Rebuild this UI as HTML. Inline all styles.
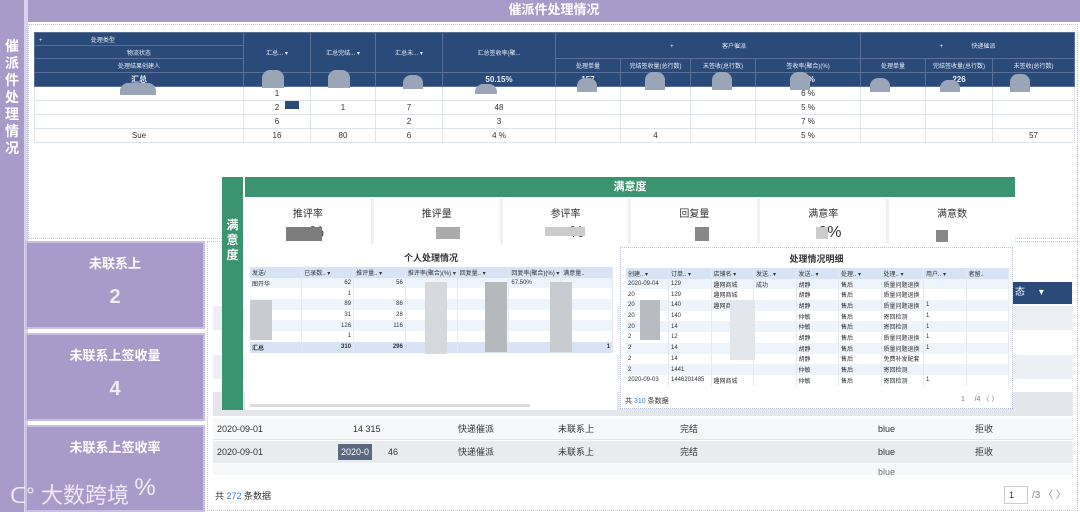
<!DOCTYPE html><html><head><meta charset="utf-8"><style>
*{box-sizing:border-box;margin:0;padding:0}
body{width:1080px;height:512px;overflow:hidden;background:#fff;font-family:"Liberation Sans","Noto Sans CJK SC",sans-serif;position:relative;font-size:8px;color:#333}
.a{position:absolute}
.pur{background:#a89ac9}
.vt{color:#fff;font-weight:bold;font-size:14px;line-height:17px;text-align:center}
table{border-collapse:collapse;table-layout:fixed}
.t1 td{border:1px solid #dfe3ea;height:14px;text-align:center;font-size:8px;overflow:hidden;white-space:nowrap}
.t1 .h td{background:#2a4a7a;color:#e8ecf4;border-color:#5a7099;font-size:6px}
.card{background:#a89ac9;border:2px solid #c9bfe0;color:#fff;text-align:center;font-weight:bold}
.kp{background:#fff;border-right:3px solid #eef0f3;text-align:center;font-size:10px;color:#333}
.st td{font-size:6px;height:10.7px;border-right:1px solid #e4e9f2;white-space:nowrap;overflow:hidden;padding:0 2px}
.blob{position:absolute;background:#9aa6b8;border-radius:8px 8px 0 0}
.gr{position:absolute;background:#eceff3}
</style></head><body>
<div class="a pur" style="left:0;top:0;width:24px;height:512px"></div>
<div class="a vt" style="left:2px;top:38px;width:20px">催<br>派<br>件<br>处<br>理<br>情<br>况</div>
<div class="a" style="left:24px;top:0;width:4px;height:512px;background:#d9d4ea"></div>
<div class="a pur" style="left:28px;top:0;width:1052px;height:22px;color:#fff;font-weight:bold;font-size:13px;text-align:center;line-height:20px">催派件处理情况</div>
<div class="a" style="left:28px;top:24px;width:1050px;height:215px;border:1px dotted #b8c4dd"></div>
<table class="a t1" style="left:34px;top:32px;width:1040px">
<colgroup><col style="width:209px"><col style="width:67px"><col style="width:65px"><col style="width:67px"><col style="width:113px"><col style="width:65px"><col style="width:70px"><col style="width:65px"><col style="width:105px"><col style="width:65px"><col style="width:67px"><col style="width:82px"></colgroup>
<tr class="h"><td style="height:13px;text-align:left;padding-left:4px">+ &nbsp; &nbsp; &nbsp; &nbsp; &nbsp; &nbsp; &nbsp; &nbsp; &nbsp; &nbsp; &nbsp; &nbsp; &nbsp; &nbsp; 处理类型</td><td rowspan="3">汇总... ▾</td><td rowspan="3">汇总完结... ▾</td><td rowspan="3">汇总未... ▾</td><td rowspan="3">汇总签收率(聚...</td><td colspan="4" style="height:26px" rowspan="2">+ &nbsp; &nbsp; &nbsp; &nbsp; &nbsp; &nbsp; &nbsp; &nbsp; &nbsp; &nbsp; &nbsp; &nbsp; &nbsp; &nbsp; 客户催派</td><td colspan="3" rowspan="2">+ &nbsp; &nbsp; &nbsp; &nbsp; &nbsp; &nbsp; &nbsp; &nbsp; 快递催派</td></tr>
<tr class="h"><td style="height:13px">物流状态</td></tr>
<tr class="h"><td style="height:14px">处理结果创建人</td><td>处理单量</td><td>完结签收量(总行数)</td><td>未签收(总行数)</td><td>签收率(聚合)(%)</td><td>处理单量</td><td>完结签收量(总行数)</td><td>未签收(总行数)</td></tr>
<tr class="h"><td style="font-size:8px;font-weight:bold">汇总</td><td></td><td></td><td></td><td style="font-size:8px;font-weight:bold">50.15%</td><td style="font-size:8px;font-weight:bold">157</td><td></td><td></td><td style="font-size:8px;font-weight:bold">5 %</td><td></td><td style="font-size:8px;font-weight:bold">226</td><td></td></tr>
<tr><td></td><td>1</td><td></td><td></td><td></td><td></td><td></td><td></td><td>6 %</td><td></td><td></td><td></td></tr>
<tr><td></td><td>2</td><td>1</td><td>7</td><td>48</td><td></td><td></td><td></td><td>5 %</td><td></td><td></td><td></td></tr>
<tr><td></td><td>6</td><td></td><td>2</td><td>3</td><td></td><td></td><td></td><td>7 %</td><td></td><td></td><td></td></tr>
<tr><td>Sue</td><td>16</td><td>80</td><td>6</td><td>4 %</td><td></td><td>4</td><td></td><td>5 %</td><td></td><td></td><td>57</td></tr>
</table>
<div class="blob" style="left:120px;top:83px;width:36px;height:12px"></div>
<div class="blob" style="left:262px;top:70px;width:22px;height:18px"></div>
<div class="blob" style="left:328px;top:70px;width:22px;height:18px"></div>
<div class="blob" style="left:403px;top:75px;width:20px;height:14px"></div>
<div class="blob" style="left:475px;top:84px;width:22px;height:10px"></div>
<div class="blob" style="left:577px;top:78px;width:20px;height:14px"></div>
<div class="blob" style="left:645px;top:72px;width:20px;height:18px"></div>
<div class="blob" style="left:712px;top:72px;width:20px;height:18px"></div>
<div class="blob" style="left:790px;top:72px;width:20px;height:18px"></div>
<div class="blob" style="left:870px;top:78px;width:20px;height:14px"></div>
<div class="blob" style="left:940px;top:80px;width:20px;height:12px"></div>
<div class="blob" style="left:1010px;top:74px;width:20px;height:18px"></div>
<div class="a" style="left:285px;top:101px;width:14px;height:8px;background:#2a4a7a"></div>

<div class="a card" style="left:25px;top:241px;width:180px;height:88px;font-size:13px;padding-top:10px">未联系上<div style="font-size:20px;margin-top:14px;color:#eee">2</div></div>
<div class="a card" style="left:25px;top:333px;width:180px;height:88px;font-size:13px;padding-top:10px">未联系上签收量<div style="font-size:20px;margin-top:14px;color:#eee">4</div></div>
<div class="a card" style="left:25px;top:425px;width:180px;height:87px;font-size:13px;padding-top:10px">未联系上签收率<div style="font-size:24px;margin-top:18px;color:#eee;font-weight:normal;padding-left:60px">%</div></div>
<div class="a" style="left:10px;top:478px;color:#f4f2f9;font-size:22px;opacity:.9">ᑕ° 大数跨境</div>

<div class="a" style="left:207px;top:241px;width:871px;height:270px;border:1px dotted #b8c4dd;background:#fff"></div>
<div class="a" style="left:1012px;top:282px;width:60px;height:22px;background:#2a4a7a;color:#fff;font-size:10px;line-height:22px;padding-left:3px">态 &nbsp; &nbsp; ▾</div>
<div class="gr" style="left:213px;top:306px;width:860px;height:24px"></div>
<div class="gr" style="left:213px;top:355px;width:860px;height:24px"></div>
<div class="gr" style="left:213px;top:392px;width:860px;height:24px;background:#e3e6ea"></div>
<div class="a" style="left:213px;top:418px;width:860px;height:22px;background:#f7f8fa;border-bottom:1px solid #e1e4e8;font-size:9px;line-height:22px">
<span class="a" style="left:4px">2020-09-01</span><span class="a" style="left:140px">14 315</span><span class="a" style="left:245px">快递催派</span><span class="a" style="left:345px">未联系上</span><span class="a" style="left:467px">完结</span><span class="a" style="left:665px">blue</span><span class="a" style="left:762px">拒收</span></div>
<div class="a" style="left:213px;top:441px;width:860px;height:22px;background:#e9ecef;font-size:9px;line-height:22px">
<span class="a" style="left:4px">2020-09-01</span><span class="a" style="left:125px;background:#5a6880;color:#fff;padding:0 3px;line-height:16px;top:3px">2020-0</span><span class="a" style="left:175px">46</span><span class="a" style="left:245px">快递催派</span><span class="a" style="left:345px">未联系上</span><span class="a" style="left:467px">完结</span><span class="a" style="left:665px">blue</span><span class="a" style="left:762px">拒收</span></div>
<div class="a" style="left:213px;top:463px;width:860px;height:12px;background:#f7f8fa;overflow:hidden;font-size:9px;color:#777"><span class="a" style="left:665px;top:4px">blue</span></div>
<div class="a" style="left:215px;top:489px;font-size:9px">共 <span style="color:#3a7bd5">272</span> 条数据</div>
<div class="a" style="left:1004px;top:486px;width:24px;height:18px;border:1px solid #ccc;font-size:9px;line-height:16px;padding-left:4px">1</div>
<div class="a" style="left:1032px;top:486px;font-size:10px;color:#888">/3 〈 〉</div>

<div class="a" style="left:222px;top:177px;width:21px;height:233px;background:#3a9470"></div>
<div class="a vt" style="left:222px;top:218px;width:21px;font-size:12px;line-height:15px">满<br>意<br>度</div>
<div class="a" style="left:245px;top:177px;width:770px;height:20px;background:#3a9470;color:#fff;font-weight:bold;font-size:11px;text-align:center;line-height:20px">满意度</div>
<div class="a" style="left:245px;top:198px;width:770px;height:46px;display:flex;background:#eef0f3">
<div class="kp" style="flex:1;padding-top:7px">推评率<div style="font-size:16px;margin-top:4px">&nbsp;&nbsp;&nbsp;&nbsp;%</div></div>
<div class="kp" style="flex:1;padding-top:7px">推评量</div>
<div class="kp" style="flex:1;padding-top:7px">参评率<div style="font-size:16px;margin-top:4px">&nbsp;&nbsp;&nbsp;&nbsp;&nbsp;%</div></div>
<div class="kp" style="flex:1;padding-top:7px">回复量</div>
<div class="kp" style="flex:1;padding-top:7px">满意率<div style="font-size:16px;margin-top:4px">&nbsp;&nbsp;&nbsp;0%</div></div>
<div class="kp" style="flex:1;padding-top:7px;border:0">满意数</div></div>
<div class="a" style="left:286px;top:227px;width:36px;height:14px;background:#7d7d7d"></div>
<div class="a" style="left:436px;top:227px;width:24px;height:12px;background:#aaa"></div>
<div class="a" style="left:545px;top:227px;width:40px;height:9px;background:#ccc"></div>
<div class="a" style="left:695px;top:227px;width:14px;height:14px;background:#888"></div>
<div class="a" style="left:816px;top:227px;width:12px;height:12px;background:#ccc"></div>
<div class="a" style="left:936px;top:230px;width:12px;height:12px;background:#888"></div>

<div class="a" style="left:245px;top:246px;width:372px;height:164px;background:#fff">
<div style="text-align:center;font-size:9px;font-weight:bold;margin-top:5px">个人处理情况</div>
<table class="st a" style="left:5px;top:21px;width:363px">
<tr style="background:#d6e4f5"><td>发送/</td><td>已录数.. ▾</td><td>推评量.. ▾</td><td>推评率(聚合)(%) ▾</td><td>回复量.. ▾</td><td>回复率(聚合)(%) ▾</td><td>满意量..</td></tr>
<tr style="background:#eef4fb"><td>图开华</td><td style="text-align:right">62</td><td style="text-align:right">56</td><td></td><td></td><td>67.50%</td><td></td></tr>
<tr><td></td><td style="text-align:right">1</td><td></td><td></td><td></td><td></td><td></td></tr>
<tr style="background:#eef4fb"><td></td><td style="text-align:right">89</td><td style="text-align:right">86</td><td></td><td></td><td></td><td></td></tr>
<tr><td></td><td style="text-align:right">31</td><td style="text-align:right">28</td><td></td><td></td><td></td><td></td></tr>
<tr style="background:#eef4fb"><td></td><td style="text-align:right">126</td><td style="text-align:right">116</td><td></td><td></td><td></td><td></td></tr>
<tr><td></td><td style="text-align:right">1</td><td></td><td></td><td></td><td></td><td></td></tr>
<tr style="background:#d6e4f5;font-weight:bold"><td>汇总</td><td style="text-align:right">310</td><td style="text-align:right">296</td><td></td><td></td><td></td><td style="text-align:right">1</td></tr>
</table>
<div class="a" style="left:5px;top:158px;width:280px;height:3px;background:#ddd"></div></div>
<div class="a" style="left:425px;top:282px;width:22px;height:72px;background:#d5d8dd"></div>
<div class="a" style="left:485px;top:282px;width:22px;height:70px;background:#b5b8bd"></div>
<div class="a" style="left:550px;top:282px;width:22px;height:70px;background:#c8ccd1"></div>
<div class="a" style="left:250px;top:300px;width:22px;height:40px;background:#c8ccd1"></div>

<div class="a" style="left:620px;top:247px;width:393px;height:162px;border:1px dotted #b8c4dd;background:#fff">
<div style="text-align:center;font-size:9px;font-weight:bold;margin-top:4px">处理情况明细</div>
<table class="st a" style="left:5px;top:20px;width:383px">
<tr style="background:#d6e4f5"><td>创建.. ▾</td><td>订单.. ▾</td><td>店铺名 ▾</td><td>发送.. ▾</td><td>发送.. ▾</td><td>处理.. ▾</td><td>处理.. ▾</td><td>用户.. ▾</td><td>者留..</td></tr>
<tr style="background:#eef4fb"><td>2020-09-04</td><td>129</td><td>趣网商城</td><td>成功</td><td>胡静</td><td>售后</td><td>质量问题退换</td><td></td><td></td></tr>
<tr><td>20</td><td>129</td><td>趣网商城</td><td></td><td>胡静</td><td>售后</td><td>质量问题退换</td><td></td><td></td></tr>
<tr style="background:#eef4fb"><td>20</td><td>140</td><td>趣网商城</td><td></td><td>胡静</td><td>售后</td><td>质量问题退换</td><td>1</td><td></td></tr>
<tr><td>20</td><td>140</td><td></td><td></td><td>仲敏</td><td>售后</td><td>寄回检测</td><td>1</td><td></td></tr>
<tr style="background:#eef4fb"><td>20</td><td>14</td><td></td><td></td><td>仲敏</td><td>售后</td><td>寄回检测</td><td>1</td><td></td></tr>
<tr><td>2</td><td>12</td><td></td><td></td><td>胡静</td><td>售后</td><td>质量问题退换</td><td>1</td><td></td></tr>
<tr style="background:#eef4fb"><td>2</td><td>14</td><td></td><td></td><td>胡静</td><td>售后</td><td>质量问题退换</td><td>1</td><td></td></tr>
<tr><td>2</td><td>14</td><td></td><td></td><td>胡静</td><td>售后</td><td>免费补发配套</td><td></td><td></td></tr>
<tr style="background:#eef4fb"><td>2</td><td>1441</td><td></td><td></td><td>仲敏</td><td>售后</td><td>寄回检测</td><td></td><td></td></tr>
<tr><td>2020-09-03</td><td>1446201485</td><td>趣网商城</td><td></td><td>仲敏</td><td>售后</td><td>寄回检测</td><td>1</td><td></td></tr>
</table>
<div class="a" style="left:4px;top:148px;font-size:7px">共 <span style="color:#3a7bd5">310</span> 条数据</div>
<div class="a" style="left:340px;top:146px;font-size:7px;color:#777">1 &nbsp; &nbsp; /4 〈 〉</div></div>
<div class="a" style="left:640px;top:300px;width:20px;height:40px;background:#b8bcc2"></div>
<div class="a" style="left:730px;top:300px;width:25px;height:60px;background:#e3e6ea"></div>
</body></html>
